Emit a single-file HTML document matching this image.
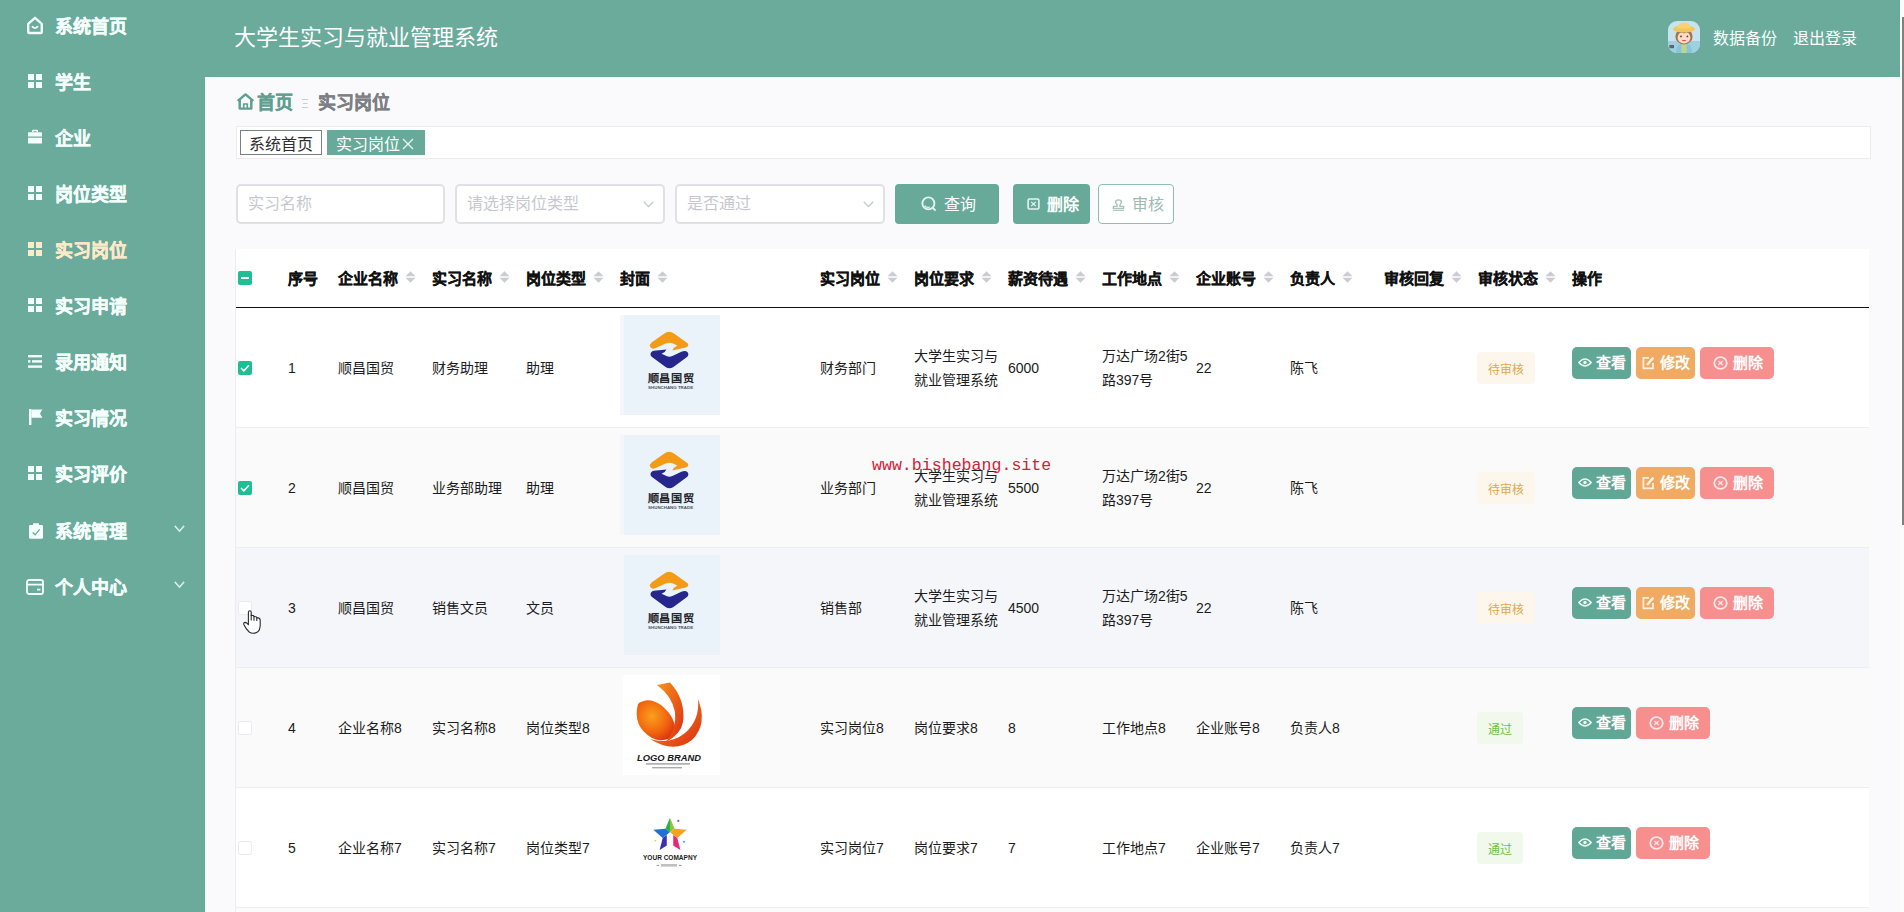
<!DOCTYPE html><html lang="zh-CN"><head><meta charset="utf-8"><title>大学生实习与就业管理系统</title><style>
*{box-sizing:border-box;margin:0;padding:0}
html,body{width:1904px;height:912px;overflow:hidden}
body{position:relative;background:#fafafc;font-family:"Liberation Sans",sans-serif;color:#1a1a1a;font-size:14px}
.abs{position:absolute}
#side{position:absolute;left:0;top:0;width:205px;height:912px;background:#6aab9c}
#head{position:absolute;left:0;top:0;width:1900px;height:77px;background:#6aab9c}
#sb{position:absolute;left:1900px;top:0;width:4px;height:912px;background:#fcfcfc}
#sb i{position:absolute;left:2.4px;top:17px;width:1.6px;height:508px;background:#808080}
#title{position:absolute;left:234px;top:23px;font-size:22px;line-height:30px;color:#fff;white-space:nowrap}
.hl{position:absolute;top:27px;font-size:16px;line-height:24px;color:#fff;white-space:nowrap}
.mi{position:absolute;left:0;width:205px;height:56px;line-height:56px;color:#f4fffc;font-weight:bold;font-size:18px;white-space:nowrap;-webkit-text-stroke:0.35px currentColor}
.mi span{position:absolute;left:55px;top:2px}
.mi svg{position:absolute}
.mi.act{color:#ffe9c9}
#bc{position:absolute;left:237px;top:91px;height:24px;line-height:24px;font-size:18px;font-weight:bold;white-space:nowrap;-webkit-text-stroke:0.3px currentColor}
#tabs{position:absolute;left:236px;top:126px;width:1635px;height:33px;background:#fff;border:1px solid #ececec}
.tag{position:absolute;top:3px;height:25px;line-height:23px;font-size:16px;white-space:nowrap;padding:2px 8px 0}
.inp{position:absolute;top:184px;height:40px;background:#fff;border:2px solid #e0e1e5;border-radius:5px;color:#c6c8cd;font-size:16px;line-height:36px;padding-left:10px;white-space:nowrap}
.btn{position:absolute;top:184px;height:40px;border-radius:4px;background:#67aa9a;color:#fff;font-size:16px;line-height:40px;white-space:nowrap}
.btn span{position:absolute;top:1px}
.btn svg{position:absolute}
#tbl{position:absolute;left:236px;top:249px;width:1633px;height:663px;overflow:hidden;background:#fff;box-shadow:-1px 0 0 #ececf0}
#thead{position:absolute;left:0;top:0;width:1633px;height:59px;border-bottom:1px solid #111;font-weight:bold;font-size:15px;color:#111;-webkit-text-stroke:0.25px #111}
.th{position:absolute;top:18px;line-height:24px;white-space:nowrap}
.car{position:absolute;top:22px;width:11px;height:12px}
.row{position:absolute;left:0;width:1633px;height:120px;border-bottom:1px solid #ebeef5}
.td{position:absolute;line-height:24px;white-space:nowrap;font-size:14px;color:#1c1c1c}
.cb{position:absolute;left:2px;width:14px;height:14px;border-radius:2px}
.cb.on{background:#1fbf96}
.cb.off{background:#fff;border:1px solid #e9ebf0}
.img{position:absolute;left:384px;width:100px;height:100px;overflow:hidden}
.tg{position:absolute;height:32px;line-height:36px;font-size:12px;border-radius:4px;text-align:center;white-space:nowrap}
.ab{position:absolute;height:32px;border-radius:5px;color:#fff;font-weight:bold;font-size:15px;line-height:32px;white-space:nowrap}
.ab span{position:absolute;top:0}
.ab svg{position:absolute}
#wm{position:absolute;left:872px;top:456px;font-family:"Liberation Mono",monospace;font-size:16.6px;line-height:20px;color:#cf2238;white-space:nowrap}
</style></head><body>
<div id="head"><div id="title">大学生实习与就业管理系统</div>
<div class="abs" id="ava" style="left:1668px;top:21px;width:32px;height:32px;border-radius:9px;overflow:hidden"><svg width="32" height="32" viewBox="0 0 32 32"><rect width="32" height="32" fill="#c7e4ee"/><rect x="0" y="20" width="32" height="12" fill="#9fd0e0"/><path d="M8 32 Q8 22 16 22 Q24 22 24 32 Z" fill="#8cc3dc"/><rect x="13.4" y="23" width="5.2" height="9" fill="#b9d88c"/><ellipse cx="16" cy="15.4" rx="8.6" ry="8" fill="#a8714a"/><ellipse cx="16" cy="16.6" rx="6.4" ry="6" fill="#fbdcc6"/><path d="M9.6 13.6 Q13 10 16 12.4 Q19.6 10 22.4 13.6 Q20 9.4 16 9.6 Q12 9.4 9.6 13.6 Z" fill="#a8714a"/><ellipse cx="16" cy="8" rx="11" ry="3.6" fill="#f2c65a"/><path d="M9 7.6 Q10 1.6 16 1.6 Q22 1.6 23 7.6 Z" fill="#f6d36e"/><circle cx="13" cy="15.4" r="0.9" fill="#5a3a2a"/><circle cx="19.4" cy="15.4" r="0.9" fill="#5a3a2a"/><path d="M12.8 18.2 Q16 22.4 19.4 18.2 Z" fill="#d8504a"/><path d="M13.2 18.3 H19 V19 H13.2 Z" fill="#fff"/><rect x="1.4" y="24" width="4.6" height="3.2" fill="#5d6670"/></svg></div>
<div class="hl" style="left:1713px">数据备份</div><div class="hl" style="left:1793px">退出登录</div></div>
<div id="side">
<div class="mi" style="top:-3px"><svg style="left:26px;top:19px" width="18" height="19" viewBox="0 0 18 19" fill="none" stroke="currentColor" stroke-width="2.4" stroke-linejoin="round" stroke-linecap="round"><path d="M2.2 7.8 L9 1.8 L15.8 7.8 V16 Q15.8 17 14.8 17 H3.2 Q2.2 17 2.2 16 Z"/><path d="M6.4 10.6 Q9 13.4 11.6 10.6" stroke-width="1.7"/></svg><span>系统首页</span></div>
<div class="mi" style="top:53px"><svg style="left:28px;top:21px" width="14" height="14" viewBox="0 0 14 14" fill="currentColor"><rect x="0" y="0" width="6" height="6"/><rect x="8" y="0" width="6" height="6"/><rect x="0" y="8" width="6" height="6"/><rect x="8" y="8" width="6" height="6"/></svg><span>学生</span></div>
<div class="mi" style="top:109px"><svg style="left:28px;top:20px" width="14" height="15" viewBox="0 0 14 14" preserveAspectRatio="none" fill="currentColor"><path d="M4 3 V1.6 Q4 0.6 5 0.6 H9 Q10 0.6 10 1.6 V3 H8.6 V2 H5.4 V3 Z"/><path d="M0 3.4 Q0 3 0.6 3 H13.4 Q14 3 14 3.4 V7 H0 Z"/><path d="M0 8.2 H14 V13 Q14 13.6 13.4 13.6 H0.6 Q0 13.6 0 13 Z"/></svg><span>企业</span></div>
<div class="mi" style="top:165px"><svg style="left:28px;top:21px" width="14" height="14" viewBox="0 0 14 14" fill="currentColor"><rect x="0" y="0" width="6" height="6"/><rect x="8" y="0" width="6" height="6"/><rect x="0" y="8" width="6" height="6"/><rect x="8" y="8" width="6" height="6"/></svg><span>岗位类型</span></div>
<div class="mi act" style="top:221px"><svg style="left:28px;top:21px" width="14" height="14" viewBox="0 0 14 14" fill="currentColor"><rect x="0" y="0" width="6" height="6"/><rect x="8" y="0" width="6" height="6"/><rect x="0" y="8" width="6" height="6"/><rect x="8" y="8" width="6" height="6"/></svg><span>实习岗位</span></div>
<div class="mi" style="top:277px"><svg style="left:28px;top:21px" width="14" height="14" viewBox="0 0 14 14" fill="currentColor"><rect x="0" y="0" width="6" height="6"/><rect x="8" y="0" width="6" height="6"/><rect x="0" y="8" width="6" height="6"/><rect x="8" y="8" width="6" height="6"/></svg><span>实习申请</span></div>
<div class="mi" style="top:333px"><svg style="left:28px;top:22px" width="14" height="13" viewBox="0 0 14 13" fill="currentColor"><rect x="0" y="0" width="14" height="2.4"/><rect x="0" y="5.2" width="2.4" height="2.4"/><rect x="4" y="5.2" width="10" height="2.4"/><rect x="0" y="10.4" width="14" height="2.4"/></svg><span>录用通知</span></div>
<div class="mi" style="top:389px"><svg style="left:29px;top:20px" width="14" height="16" viewBox="0 0 14 16" fill="currentColor"><rect x="0" y="0" width="2.4" height="16"/><path d="M2.4 0.6 H13.4 L11 4.6 L13.4 8.8 H2.4 Z"/></svg><span>实习情况</span></div>
<div class="mi" style="top:445px"><svg style="left:28px;top:21px" width="14" height="14" viewBox="0 0 14 14" fill="currentColor"><rect x="0" y="0" width="6" height="6"/><rect x="8" y="0" width="6" height="6"/><rect x="0" y="8" width="6" height="6"/><rect x="8" y="8" width="6" height="6"/></svg><span>实习评价</span></div>
<div class="mi" style="top:502px"><svg style="left:29px;top:21px" width="14" height="16" viewBox="0 0 14 16"><path fill="currentColor" d="M1.2 2 H4 V0.8 Q4 0.2 4.6 0.2 H9.4 Q10 0.2 10 0.8 V2 H12.8 Q14 2 14 3.2 V14.6 Q14 15.8 12.8 15.8 H1.2 Q0 15.8 0 14.6 V3.2 Q0 2 1.2 2 Z"/><path d="M3.6 9.4 L6.2 11.8 L10.6 6.4" fill="none" stroke="#6aab9c" stroke-width="1.3"/></svg><span>系统管理</span><svg style="left:174px;top:23px" width="11" height="7.6" viewBox="0 0 11 7" preserveAspectRatio="none" fill="none" stroke="#d6f1ea" stroke-width="1.4"><path d="M0.8 0.8 L5.5 5.6 L10.2 0.8"/></svg></div>
<div class="mi" style="top:558px"><svg style="left:26px;top:21px" width="18" height="16" viewBox="0 0 18 16" fill="none" stroke="currentColor" stroke-width="1.8"><rect x="1" y="1" width="16" height="14" rx="2"/><path d="M1 5.6 H17"/><path d="M11 10.6 H14.4"/></svg><span>个人中心</span><svg style="left:174px;top:23px" width="11" height="7.6" viewBox="0 0 11 7" preserveAspectRatio="none" fill="none" stroke="#d6f1ea" stroke-width="1.4"><path d="M0.8 0.8 L5.5 5.6 L10.2 0.8"/></svg></div>
</div>
<div id="sb"><i></i></div>
<div id="bc"><svg class="abs" style="left:0;top:2px" width="17" height="17" viewBox="0.4 0 15.2 17" preserveAspectRatio="none" fill="none" stroke="#5f9f90" stroke-width="2.2" stroke-linejoin="round"><path d="M1 8 L8 1.4 L15 8"/><path d="M2.8 7 V15.6 H13.2 V7"/><path d="M6.4 15.6 V11 H9.6 V15.6" stroke-width="1.5"/></svg><span class="abs" style="left:20px;color:#5f9f90">首页</span><svg class="abs" style="left:64px;top:7px" width="8" height="11" viewBox="0 0 8 11" stroke="#c9ccd2" stroke-width="1.2"><path d="M1 1.5 H7 M2 5.5 H6.5 M1 9.5 H7"/></svg><span class="abs" style="left:81px;color:#7c7f83">实习岗位</span></div>
<div id="tabs"><div class="tag" style="left:3px;border:1px solid #76827f;color:#2e2e2e;background:#fff">系统首页</div><div class="tag" style="left:90px;width:98px;background:#67aa9a;color:#fff;border:1px solid #67aa9a;padding:2px 0 0 8px">实习岗位<svg class="abs" style="left:74px;top:7px" width="12" height="12" viewBox="0 0 12 12" stroke="#e9f6f2" stroke-width="1.3"><path d="M1 1 L11 11 M11 1 L1 11"/></svg></div></div>
<div class="inp" style="left:236px;width:209px">实习名称</div>
<div class="inp" style="left:455px;width:210px">请选择岗位类型<svg class="abs" style="right:9.5px;top:15px" width="11" height="7" viewBox="0 0 11 7" fill="none" stroke="#c3c6cd" stroke-width="1.3"><path d="M0.8 0.8 L5.5 5.6 L10.2 0.8"/></svg></div>
<div class="inp" style="left:675px;width:210px">是否通过<svg class="abs" style="right:9.5px;top:15px" width="11" height="7" viewBox="0 0 11 7" fill="none" stroke="#c3c6cd" stroke-width="1.3"><path d="M0.8 0.8 L5.5 5.6 L10.2 0.8"/></svg></div>
<div class="btn" style="left:895px;width:104px"><svg style="left:26px;top:12px" width="16" height="16" viewBox="0 0 16 16" fill="none" stroke="#e4f5f0" stroke-width="1.9"><circle cx="7.4" cy="7.4" r="6"/><path d="M11.6 11.8 L14.6 14.6"/><path d="M3.6 9.6 Q5.6 12.2 9 11" stroke-width="1.2"/></svg><span style="left:49px">查询</span></div>
<div class="btn" style="left:1013px;width:77px;font-weight:bold"><svg style="left:14px;top:14px" width="13" height="12" viewBox="0 0 14 14" preserveAspectRatio="none" fill="none" stroke="#e4f5f0" stroke-width="1.7"><rect x="1.2" y="1.2" width="11.6" height="11.6" rx="1.5"/><path d="M4.6 4.6 L9.4 9.4 M9.4 4.6 L4.6 9.4" stroke-width="1.3"/></svg><span style="left:34px">删除</span></div>
<div class="btn" style="left:1098px;width:76px;background:#fff;border:1px solid #8dbdb1;color:#9db9b2;line-height:38px"><svg style="left:13px;top:14px" width="13" height="12" viewBox="0 0 13 14" preserveAspectRatio="none" fill="none" stroke="#a9c3bc" stroke-width="1.4"><path d="M5 6.6 Q3.6 5 3.6 3.6 Q3.6 1 6.5 1 Q9.4 1 9.4 3.6 Q9.4 5 8 6.6 V8.6 H11.6 V11 H1.4 V8.6 H5 Z"/><path d="M1 13.2 H12"/></svg><span style="left:33px">审核</span></div>
<div id="tbl"><div id="thead">
<div class="cb on" style="top:22px"><i class="abs" style="left:3px;top:6px;width:8px;height:2px;background:#fff"></i></div>
<div class="th" style="left:52px">序号</div>
<div class="th" style="left:102px">企业名称</div>
<svg class="car" style="left:169px" viewBox="0 0 10 11"><path d="M5 0.2 L9.6 4.8 H0.4 Z" fill="#c9ccd2"/><path d="M5 10.8 L9.6 6.2 H0.4 Z" fill="#c9ccd2"/></svg>
<div class="th" style="left:196px">实习名称</div>
<svg class="car" style="left:263px" viewBox="0 0 10 11"><path d="M5 0.2 L9.6 4.8 H0.4 Z" fill="#c9ccd2"/><path d="M5 10.8 L9.6 6.2 H0.4 Z" fill="#c9ccd2"/></svg>
<div class="th" style="left:290px">岗位类型</div>
<svg class="car" style="left:357px" viewBox="0 0 10 11"><path d="M5 0.2 L9.6 4.8 H0.4 Z" fill="#c9ccd2"/><path d="M5 10.8 L9.6 6.2 H0.4 Z" fill="#c9ccd2"/></svg>
<div class="th" style="left:384px">封面</div>
<svg class="car" style="left:421px" viewBox="0 0 10 11"><path d="M5 0.2 L9.6 4.8 H0.4 Z" fill="#c9ccd2"/><path d="M5 10.8 L9.6 6.2 H0.4 Z" fill="#c9ccd2"/></svg>
<div class="th" style="left:584px">实习岗位</div>
<svg class="car" style="left:651px" viewBox="0 0 10 11"><path d="M5 0.2 L9.6 4.8 H0.4 Z" fill="#c9ccd2"/><path d="M5 10.8 L9.6 6.2 H0.4 Z" fill="#c9ccd2"/></svg>
<div class="th" style="left:678px">岗位要求</div>
<svg class="car" style="left:745px" viewBox="0 0 10 11"><path d="M5 0.2 L9.6 4.8 H0.4 Z" fill="#c9ccd2"/><path d="M5 10.8 L9.6 6.2 H0.4 Z" fill="#c9ccd2"/></svg>
<div class="th" style="left:772px">薪资待遇</div>
<svg class="car" style="left:839px" viewBox="0 0 10 11"><path d="M5 0.2 L9.6 4.8 H0.4 Z" fill="#c9ccd2"/><path d="M5 10.8 L9.6 6.2 H0.4 Z" fill="#c9ccd2"/></svg>
<div class="th" style="left:866px">工作地点</div>
<svg class="car" style="left:933px" viewBox="0 0 10 11"><path d="M5 0.2 L9.6 4.8 H0.4 Z" fill="#c9ccd2"/><path d="M5 10.8 L9.6 6.2 H0.4 Z" fill="#c9ccd2"/></svg>
<div class="th" style="left:960px">企业账号</div>
<svg class="car" style="left:1027px" viewBox="0 0 10 11"><path d="M5 0.2 L9.6 4.8 H0.4 Z" fill="#c9ccd2"/><path d="M5 10.8 L9.6 6.2 H0.4 Z" fill="#c9ccd2"/></svg>
<div class="th" style="left:1054px">负责人</div>
<svg class="car" style="left:1106px" viewBox="0 0 10 11"><path d="M5 0.2 L9.6 4.8 H0.4 Z" fill="#c9ccd2"/><path d="M5 10.8 L9.6 6.2 H0.4 Z" fill="#c9ccd2"/></svg>
<div class="th" style="left:1148px">审核回复</div>
<svg class="car" style="left:1215px" viewBox="0 0 10 11"><path d="M5 0.2 L9.6 4.8 H0.4 Z" fill="#c9ccd2"/><path d="M5 10.8 L9.6 6.2 H0.4 Z" fill="#c9ccd2"/></svg>
<div class="th" style="left:1242px">审核状态</div>
<svg class="car" style="left:1309px" viewBox="0 0 10 11"><path d="M5 0.2 L9.6 4.8 H0.4 Z" fill="#c9ccd2"/><path d="M5 10.8 L9.6 6.2 H0.4 Z" fill="#c9ccd2"/></svg>
<div class="th" style="left:1336px">操作</div>
</div>
<div class="row" style="top:59px;background:#fff">
<div class="cb on" style="top:53px"><svg class="abs" style="left:2px;top:3px" width="10" height="8" viewBox="0 0 10 8" fill="none" stroke="#fff" stroke-width="1.5"><path d="M1 4 L3.8 6.8 L9 1.2"/></svg></div>
<div class="td" style="left:52px;top:48px">1</div>
<div class="td" style="left:102px;top:48px">顺昌国贸</div>
<div class="td" style="left:196px;top:48px">财务助理</div>
<div class="td" style="left:290px;top:48px">助理</div>
<div class="img" style="top:7px"><svg width="100" height="100" viewBox="0 0 100 100"><rect width="100" height="100" fill="#eaf2fa"/><rect width="4" height="100" fill="#f5f6f9"/><path d="M49 16.8 Q46.4 16.8 44.4 18.4 L31.6 27.6 Q29.4 29.6 30 31.6 Q31.6 34.8 35.6 33 L45.6 28.6 Q49.4 27 53 28.6 L57.4 30.6 Q53.6 32.4 52.4 35.4 L65.6 32.6 Q69.6 31.2 67.6 28.2 L54 18.4 Q51.6 16.8 49 16.8 Z" fill="#f39a17"/><path d="M31 37.4 Q29.6 40 32 42 L45.6 52 Q49.4 54.4 53.4 52 L67 42 Q69.2 40 67.8 37.4 Q65.4 35 61.4 36.8 L52.4 41 Q49.4 42.4 46.4 41 L41.6 38.8 Q45.4 37.4 46.4 34.6 L34 35.8 Q32 36 31 37.4 Z" fill="#27268c"/><text x="51" y="67.4" text-anchor="middle" font-family="Liberation Sans,sans-serif" font-weight="bold" font-size="10.6" fill="#26262c" textLength="46.5" lengthAdjust="spacingAndGlyphs">顺昌国贸</text><text x="50.6" y="74.2" text-anchor="middle" font-family="Liberation Sans,sans-serif" font-weight="bold" font-size="3.9" fill="#50515a" textLength="45" lengthAdjust="spacingAndGlyphs">SHUNCHANG  TRADE</text></svg></div>
<div class="td" style="left:584px;top:48px">财务部门</div>
<div class="td" style="left:678px;top:36px">大学生实习与<br>就业管理系统</div>
<div class="td" style="left:772px;top:48px">6000</div>
<div class="td" style="left:866px;top:36px">万达广场2街5<br>路397号</div>
<div class="td" style="left:960px;top:48px">22</div>
<div class="td" style="left:1054px;top:48px">陈飞</div>
<div class="tg" style="left:1241px;top:44px;width:58px;background:#fdf6ec;color:#e0a84c">待审核</div>
<div class="ab" style="left:1336px;top:39px;width:59px;background:#60a796"><svg style="left:6px;top:10px" width="14" height="11" viewBox="0 0 14 11" fill="none" stroke="#eaf7f3" stroke-width="1.5"><path d="M0.8 5.5 Q7 -1.6 13.2 5.5 Q7 12.6 0.8 5.5 Z"/><circle cx="7" cy="5.5" r="1.7" fill="#eaf7f3" stroke="none"/></svg><span style="left:24px">查看</span></div>
<div class="ab" style="left:1400px;top:39px;width:59px;background:#f0aa62"><svg style="left:6px;top:9px" width="13" height="14" viewBox="0 0 13 14" fill="none" stroke="#fdf1e2" stroke-width="1.7"><path d="M7 1.8 H1.4 V12.4 H11 V7"/><path d="M5 9 L11.4 1.6" stroke-width="2.4"/></svg><span style="left:24px">修改</span></div>
<div class="ab" style="left:1464px;top:39px;width:74px;background:#f78f8e"><svg style="left:13px;top:9px" width="15" height="14" viewBox="0 0 14 14" preserveAspectRatio="none" fill="none" stroke="#fde6e6" stroke-width="1.7"><circle cx="7" cy="7" r="5.8"/><path d="M5 5 L9 9 M9 5 L5 9" stroke-width="1.3"/></svg><span style="left:33px">删除</span></div>
</div>
<div class="row" style="top:179px;background:#fafafa">
<div class="cb on" style="top:53px"><svg class="abs" style="left:2px;top:3px" width="10" height="8" viewBox="0 0 10 8" fill="none" stroke="#fff" stroke-width="1.5"><path d="M1 4 L3.8 6.8 L9 1.2"/></svg></div>
<div class="td" style="left:52px;top:48px">2</div>
<div class="td" style="left:102px;top:48px">顺昌国贸</div>
<div class="td" style="left:196px;top:48px">业务部助理</div>
<div class="td" style="left:290px;top:48px">助理</div>
<div class="img" style="top:7px"><svg width="100" height="100" viewBox="0 0 100 100"><rect width="100" height="100" fill="#eaf2fa"/><rect width="4" height="100" fill="#f5f6f9"/><path d="M49 16.8 Q46.4 16.8 44.4 18.4 L31.6 27.6 Q29.4 29.6 30 31.6 Q31.6 34.8 35.6 33 L45.6 28.6 Q49.4 27 53 28.6 L57.4 30.6 Q53.6 32.4 52.4 35.4 L65.6 32.6 Q69.6 31.2 67.6 28.2 L54 18.4 Q51.6 16.8 49 16.8 Z" fill="#f39a17"/><path d="M31 37.4 Q29.6 40 32 42 L45.6 52 Q49.4 54.4 53.4 52 L67 42 Q69.2 40 67.8 37.4 Q65.4 35 61.4 36.8 L52.4 41 Q49.4 42.4 46.4 41 L41.6 38.8 Q45.4 37.4 46.4 34.6 L34 35.8 Q32 36 31 37.4 Z" fill="#27268c"/><text x="51" y="67.4" text-anchor="middle" font-family="Liberation Sans,sans-serif" font-weight="bold" font-size="10.6" fill="#26262c" textLength="46.5" lengthAdjust="spacingAndGlyphs">顺昌国贸</text><text x="50.6" y="74.2" text-anchor="middle" font-family="Liberation Sans,sans-serif" font-weight="bold" font-size="3.9" fill="#50515a" textLength="45" lengthAdjust="spacingAndGlyphs">SHUNCHANG  TRADE</text></svg></div>
<div class="td" style="left:584px;top:48px">业务部门</div>
<div class="td" style="left:678px;top:36px">大学生实习与<br>就业管理系统</div>
<div class="td" style="left:772px;top:48px">5500</div>
<div class="td" style="left:866px;top:36px">万达广场2街5<br>路397号</div>
<div class="td" style="left:960px;top:48px">22</div>
<div class="td" style="left:1054px;top:48px">陈飞</div>
<div class="tg" style="left:1241px;top:44px;width:58px;background:#fdf6ec;color:#e0a84c">待审核</div>
<div class="ab" style="left:1336px;top:39px;width:59px;background:#60a796"><svg style="left:6px;top:10px" width="14" height="11" viewBox="0 0 14 11" fill="none" stroke="#eaf7f3" stroke-width="1.5"><path d="M0.8 5.5 Q7 -1.6 13.2 5.5 Q7 12.6 0.8 5.5 Z"/><circle cx="7" cy="5.5" r="1.7" fill="#eaf7f3" stroke="none"/></svg><span style="left:24px">查看</span></div>
<div class="ab" style="left:1400px;top:39px;width:59px;background:#f0aa62"><svg style="left:6px;top:9px" width="13" height="14" viewBox="0 0 13 14" fill="none" stroke="#fdf1e2" stroke-width="1.7"><path d="M7 1.8 H1.4 V12.4 H11 V7"/><path d="M5 9 L11.4 1.6" stroke-width="2.4"/></svg><span style="left:24px">修改</span></div>
<div class="ab" style="left:1464px;top:39px;width:74px;background:#f78f8e"><svg style="left:13px;top:9px" width="15" height="14" viewBox="0 0 14 14" preserveAspectRatio="none" fill="none" stroke="#fde6e6" stroke-width="1.7"><circle cx="7" cy="7" r="5.8"/><path d="M5 5 L9 9 M9 5 L5 9" stroke-width="1.3"/></svg><span style="left:33px">删除</span></div>
</div>
<div class="row" style="top:299px;background:#f5f6f9">
<div class="cb off" style="top:53px"></div>
<div class="td" style="left:52px;top:48px">3</div>
<div class="td" style="left:102px;top:48px">顺昌国贸</div>
<div class="td" style="left:196px;top:48px">销售文员</div>
<div class="td" style="left:290px;top:48px">文员</div>
<div class="img" style="top:7px"><svg width="100" height="100" viewBox="0 0 100 100"><rect width="100" height="100" fill="#eaf2fa"/><rect width="4" height="100" fill="#f5f6f9"/><path d="M49 16.8 Q46.4 16.8 44.4 18.4 L31.6 27.6 Q29.4 29.6 30 31.6 Q31.6 34.8 35.6 33 L45.6 28.6 Q49.4 27 53 28.6 L57.4 30.6 Q53.6 32.4 52.4 35.4 L65.6 32.6 Q69.6 31.2 67.6 28.2 L54 18.4 Q51.6 16.8 49 16.8 Z" fill="#f39a17"/><path d="M31 37.4 Q29.6 40 32 42 L45.6 52 Q49.4 54.4 53.4 52 L67 42 Q69.2 40 67.8 37.4 Q65.4 35 61.4 36.8 L52.4 41 Q49.4 42.4 46.4 41 L41.6 38.8 Q45.4 37.4 46.4 34.6 L34 35.8 Q32 36 31 37.4 Z" fill="#27268c"/><text x="51" y="67.4" text-anchor="middle" font-family="Liberation Sans,sans-serif" font-weight="bold" font-size="10.6" fill="#26262c" textLength="46.5" lengthAdjust="spacingAndGlyphs">顺昌国贸</text><text x="50.6" y="74.2" text-anchor="middle" font-family="Liberation Sans,sans-serif" font-weight="bold" font-size="3.9" fill="#50515a" textLength="45" lengthAdjust="spacingAndGlyphs">SHUNCHANG  TRADE</text></svg></div>
<div class="td" style="left:584px;top:48px">销售部</div>
<div class="td" style="left:678px;top:36px">大学生实习与<br>就业管理系统</div>
<div class="td" style="left:772px;top:48px">4500</div>
<div class="td" style="left:866px;top:36px">万达广场2街5<br>路397号</div>
<div class="td" style="left:960px;top:48px">22</div>
<div class="td" style="left:1054px;top:48px">陈飞</div>
<div class="tg" style="left:1241px;top:44px;width:58px;background:#fdf6ec;color:#e0a84c">待审核</div>
<div class="ab" style="left:1336px;top:39px;width:59px;background:#60a796"><svg style="left:6px;top:10px" width="14" height="11" viewBox="0 0 14 11" fill="none" stroke="#eaf7f3" stroke-width="1.5"><path d="M0.8 5.5 Q7 -1.6 13.2 5.5 Q7 12.6 0.8 5.5 Z"/><circle cx="7" cy="5.5" r="1.7" fill="#eaf7f3" stroke="none"/></svg><span style="left:24px">查看</span></div>
<div class="ab" style="left:1400px;top:39px;width:59px;background:#f0aa62"><svg style="left:6px;top:9px" width="13" height="14" viewBox="0 0 13 14" fill="none" stroke="#fdf1e2" stroke-width="1.7"><path d="M7 1.8 H1.4 V12.4 H11 V7"/><path d="M5 9 L11.4 1.6" stroke-width="2.4"/></svg><span style="left:24px">修改</span></div>
<div class="ab" style="left:1464px;top:39px;width:74px;background:#f78f8e"><svg style="left:13px;top:9px" width="15" height="14" viewBox="0 0 14 14" preserveAspectRatio="none" fill="none" stroke="#fde6e6" stroke-width="1.7"><circle cx="7" cy="7" r="5.8"/><path d="M5 5 L9 9 M9 5 L5 9" stroke-width="1.3"/></svg><span style="left:33px">删除</span></div>
</div>
<div class="row" style="top:419px;background:#fafafa">
<div class="cb off" style="top:53px"></div>
<div class="td" style="left:52px;top:48px">4</div>
<div class="td" style="left:102px;top:48px">企业名称8</div>
<div class="td" style="left:196px;top:48px">实习名称8</div>
<div class="td" style="left:290px;top:48px">岗位类型8</div>
<div class="img" style="top:7px"><svg width="100" height="100" viewBox="0 0 100 100"><defs><radialGradient id="g2a" cx="0.4" cy="0.4" r="0.7"><stop offset="0" stop-color="#fba01c"/><stop offset="0.6" stop-color="#f0640f"/><stop offset="1" stop-color="#d9300f"/></radialGradient><linearGradient id="g2b" x1="0" y1="0" x2="1" y2="1"><stop offset="0" stop-color="#f7941d"/><stop offset="1" stop-color="#dc2d12"/></linearGradient></defs><rect width="100" height="100" fill="#fff"/><rect width="3" height="100" fill="#fbfbfb"/><g transform="translate(0,-3)"><path d="M18 32 Q28 24 41 33 Q57 46 55 62 Q45 72 32 66 Q12 54 18 32 Z" fill="url(#g2a)"/><path d="M37 13 L50 10.4 Q66 28 63 50 Q61 62 46 70 Q57 56 55 40 Q52 24 37 13 Z" fill="url(#g2b)"/><path d="M78 27 Q88 52 72 68 Q54 82 30 67 Q50 73 65 61 Q80 48 78 27 Z" fill="url(#g2b)"/></g><text x="49" y="85.6" text-anchor="middle" font-family="Liberation Sans,sans-serif" font-weight="bold" font-style="italic" font-size="8.6" fill="#15151a" textLength="64" lengthAdjust="spacingAndGlyphs">LOGO BRAND</text><rect x="26" y="88.2" width="44" height="1.4" fill="#777" opacity="0.7"/><rect x="32" y="92" width="30" height="1.4" fill="#888" opacity="0.7"/></svg></div>
<div class="td" style="left:584px;top:48px">实习岗位8</div>
<div class="td" style="left:678px;top:48px">岗位要求8</div>
<div class="td" style="left:772px;top:48px">8</div>
<div class="td" style="left:866px;top:48px">工作地点8</div>
<div class="td" style="left:960px;top:48px">企业账号8</div>
<div class="td" style="left:1054px;top:48px">负责人8</div>
<div class="tg" style="left:1241px;top:44px;width:46px;background:#f1f9ec;color:#74c044">通过</div>
<div class="ab" style="left:1336px;top:39px;width:59px;background:#60a796"><svg style="left:6px;top:10px" width="14" height="11" viewBox="0 0 14 11" fill="none" stroke="#eaf7f3" stroke-width="1.5"><path d="M0.8 5.5 Q7 -1.6 13.2 5.5 Q7 12.6 0.8 5.5 Z"/><circle cx="7" cy="5.5" r="1.7" fill="#eaf7f3" stroke="none"/></svg><span style="left:24px">查看</span></div>
<div class="ab" style="left:1400px;top:39px;width:74px;background:#f78f8e"><svg style="left:13px;top:9px" width="15" height="14" viewBox="0 0 14 14" preserveAspectRatio="none" fill="none" stroke="#fde6e6" stroke-width="1.7"><circle cx="7" cy="7" r="5.8"/><path d="M5 5 L9 9 M9 5 L5 9" stroke-width="1.3"/></svg><span style="left:33px">删除</span></div>
</div>
<div class="row" style="top:539px;background:#fff">
<div class="cb off" style="top:53px"></div>
<div class="td" style="left:52px;top:48px">5</div>
<div class="td" style="left:102px;top:48px">企业名称7</div>
<div class="td" style="left:196px;top:48px">实习名称7</div>
<div class="td" style="left:290px;top:48px">岗位类型7</div>
<div class="img" style="top:7px"><svg width="100" height="100" viewBox="0 0 100 100"><rect width="100" height="100" fill="#fff"/><g transform="translate(50,39.4) scale(1.04)"><path d="M0 -16 L-4.4 -5.4 L0 -2 Z" fill="#2fae4f"/><path d="M0 -16 L4.4 -5.4 L0 -2 Z" fill="#8cc63f"/><path d="M-4.4 -5.4 L-16 -4.4 L-7 3.4 L0 -2 Z" fill="#1e6fd6"/><path d="M4.4 -5.4 L16 -4.4 L7 3.4 L0 -2 Z" fill="#f7a21b"/><path d="M-7 3.4 L-10 15 L-3 10.6 L-3 0.6 Z" fill="#3b2fb3"/><path d="M7 3.4 L10 15 L3 10.6 L3 0.6 Z" fill="#e5287a"/><path d="M-3 0.6 L0 -2 L3 0.6 L3 10.6 L0 8.6 L-3 10.6 Z" fill="#fff"/><circle cx="8" cy="-13" r="1" fill="#9a3fc0"/><circle cx="13.4" cy="7" r="1" fill="#29b6e8"/><circle cx="-14" cy="6" r="0.8" fill="#f7c21b"/></g><text x="50" y="65" text-anchor="middle" font-family="Liberation Sans,sans-serif" font-weight="bold" font-size="6.6" fill="#1d1d22" textLength="54" lengthAdjust="spacingAndGlyphs">YOUR  COMAPNY</text><path d="M36.6 70.4 H39 M59 70.4 H61.6" stroke="#666" stroke-width="0.7"/><rect x="41" y="69" width="16" height="2.6" fill="#8a8a8a" opacity="0.55"/></svg></div>
<div class="td" style="left:584px;top:48px">实习岗位7</div>
<div class="td" style="left:678px;top:48px">岗位要求7</div>
<div class="td" style="left:772px;top:48px">7</div>
<div class="td" style="left:866px;top:48px">工作地点7</div>
<div class="td" style="left:960px;top:48px">企业账号7</div>
<div class="td" style="left:1054px;top:48px">负责人7</div>
<div class="tg" style="left:1241px;top:44px;width:46px;background:#f1f9ec;color:#74c044">通过</div>
<div class="ab" style="left:1336px;top:39px;width:59px;background:#60a796"><svg style="left:6px;top:10px" width="14" height="11" viewBox="0 0 14 11" fill="none" stroke="#eaf7f3" stroke-width="1.5"><path d="M0.8 5.5 Q7 -1.6 13.2 5.5 Q7 12.6 0.8 5.5 Z"/><circle cx="7" cy="5.5" r="1.7" fill="#eaf7f3" stroke="none"/></svg><span style="left:24px">查看</span></div>
<div class="ab" style="left:1400px;top:39px;width:74px;background:#f78f8e"><svg style="left:13px;top:9px" width="15" height="14" viewBox="0 0 14 14" preserveAspectRatio="none" fill="none" stroke="#fde6e6" stroke-width="1.7"><circle cx="7" cy="7" r="5.8"/><path d="M5 5 L9 9 M9 5 L5 9" stroke-width="1.3"/></svg><span style="left:33px">删除</span></div>
</div>
<div class="row" style="top:659px;background:#fafafa;height:10px"></div>
</div>
<div id="wm">www.bishebang.site</div>
<svg class="abs" style="left:243px;top:609.6px" width="18" height="24.4" viewBox="0 0 18 24.4" fill="#fff" stroke="#2a2a2a" stroke-width="1.1" stroke-linejoin="round" stroke-linecap="round"><path d="M5.4 14.6 V2.2 Q5.4 0.8 6.8 0.8 Q8.2 0.8 8.2 2.2 V5.4 Q10.9 5.2 11 6.6 Q13.7 6.4 13.8 7.6 Q17 7.6 17.2 10 V15 Q17.2 20 14.4 22 Q10 24.6 6.2 22 Q3 19 0.8 14.4 Q0.4 12.4 2.4 12.4 Q3.6 12.6 5.4 14.6 Z"/><path d="M8.2 5.4 V10 M11 6.6 V10.2 M13.8 7.6 V10.4" fill="none"/></svg>
</body></html>
